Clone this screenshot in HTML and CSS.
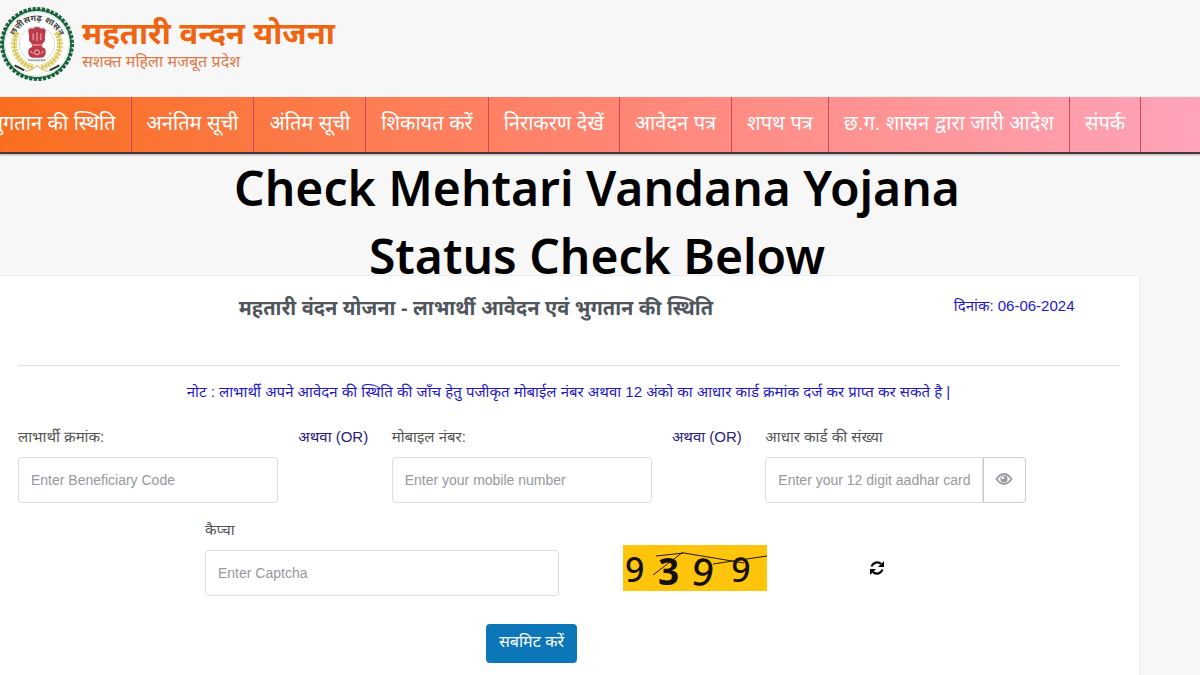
FILE: index.html
```html
<!DOCTYPE html>
<html lang="hi">
<head>
  <meta charset="UTF-8">
  <meta name="viewport" content="width=device-width, initial-scale=1.0">
  <title>महतारी वन्दन योजना</title>
  <link rel="stylesheet" href="styles.css">
</head>
<body>
  <header class="site-header">
    <svg class="logo" viewBox="0 0 76 76" role="img" aria-label="छत्तीसगढ़ शासन">
      <circle cx="38" cy="38" r="35" fill="#fdfdfb" stroke="#2c7a54" stroke-width="2"/>
      <circle cx="38" cy="38" r="36" fill="none" stroke="#17613c" stroke-width="4" stroke-dasharray="3.200 1.512"/>
      <circle cx="38" cy="38" r="33" fill="none" stroke="#b9d4c3" stroke-width="0.600"/>
      <path id="arc" d="M14 34 A24.500 24.500 0 0 1 62 34" fill="none"/>
      <text class="logo-text"><textPath href="#arc" startOffset="50%" text-anchor="middle">छत्तीसगढ़ शासन</textPath></text>
      <path d="M18 26 A24 24 0 0 0 34 62 M58 26 A24 24 0 0 1 42 62" fill="none" stroke="#e2d26e" stroke-width="6" stroke-dasharray="2.600 1"/>
      <path d="M18 26 A24 24 0 0 0 34 62 M58 26 A24 24 0 0 1 42 62" fill="none" stroke="#cdbb55" stroke-width="1"/>
      <circle cx="38" cy="38" r="18" fill="#fff" stroke="#cfe0da" stroke-width="1"/>
      <path d="M15 60 L25 65 M51 65 L61 60" stroke="#333" stroke-width="2"/>
      <path d="M26 66 Q33 65 38 60 Q43 65 50 66" fill="none" stroke="#d8c98c" stroke-width="1.400"/>
      <g fill="#bd3a49">
        <path d="M29 24 q1-3 5-2 q4-3 8 0 q4-1 5 2 l-1 7 q1 4-2 6 h-12 q-3-2-2-6z"/>
        <path d="M32 36 h12 l-1 5 h-10z"/>
        <rect x="29" y="41" width="18" height="11" rx="5"/>
      </g>
      <path d="M34 27 v7 M38 26 v9 M42 27 v7 M33 39 h10" stroke="#f0bcc0" stroke-width="1"/>
      <circle cx="38" cy="46.500" r="2.500" fill="none" stroke="#f3cdd0"/>
      <path d="M31 45 l3 3 M45 45 l-3 3" stroke="#f3cdd0"/>
      <path d="M29 54.500 h18" stroke="#777" stroke-width="1.300" stroke-dasharray="2 0.600"/>
    </svg>
    <div class="brand">
      <div class="brand-name">महतारी वन्दन योजना</div>
      <div class="brand-tag">सशक्त महिला मजबूत प्रदेश</div>
    </div>
  </header>

  <nav class="main-nav">
    <a href="#">भुगतान की स्थिति</a>
    <a href="#">अनंतिम सूची</a>
    <a href="#">अंतिम सूची</a>
    <a href="#">शिकायत करें</a>
    <a href="#">निराकरण देखें</a>
    <a href="#">आवेदन पत्र</a>
    <a href="#">शपथ पत्र</a>
    <a href="#">छ.ग. शासन द्वारा जारी आदेश</a>
    <a href="#">संपर्क</a>
  </nav>

  <h1 class="headline">Check Mehtari Vandana Yojana<br>Status Check Below</h1>

  <main class="card">
    <div class="card-head">
      <h2>महतारी वंदन योजना - लाभार्थी आवेदन एवं भुगतान की स्थिति</h2>
      <div class="date">दिनांक: 06-06-2024</div>
    </div>
    <p class="note">नोट : लाभार्थी अपने आवेदन की स्थिति की जाँच हेतु पजीकृत मोबाईल नंबर अथवा 12 अंको का आधार कार्ड क्रमांक दर्ज कर प्राप्त कर सकते है |</p>
    <form>
      <div class="row">
        <div class="field">
          <label for="code">लाभार्थी क्रमांक:</label>
          <input type="text" id="code" placeholder="Enter Beneficiary Code">
        </div>
        <div class="or">अथवा (OR)</div>
        <div class="field">
          <label for="mobile">मोबाइल नंबर:</label>
          <input type="text" id="mobile" placeholder="Enter your mobile number">
        </div>
        <div class="or">अथवा (OR)</div>
        <div class="field">
          <label for="aadhar">आधार कार्ड की संख्या</label>
          <div class="input-group">
            <input type="text" id="aadhar" placeholder="Enter your 12 digit aadhar card">
            <button type="button" class="eye" aria-label="Show">
              <svg viewBox="0 0 18 14" width="18" height="14">
                <path d="M1.500 7 Q9 -3 16.500 7 Q9 17 1.500 7z" fill="none" stroke="#999ea3" stroke-width="1.800"/>
                <circle cx="9" cy="7" r="3.600" fill="#999ea3"/>
                <circle cx="7.800" cy="5.800" r="1.300" fill="#fff"/>
              </svg>
            </button>
          </div>
        </div>
      </div>
      <div class="row captcha-row">
        <div class="field captcha-field">
          <label for="captcha">कैप्चा</label>
          <input type="text" id="captcha" placeholder="Enter Captcha">
        </div>
        <svg class="captcha" viewBox="0 0 144 46" role="img" aria-label="captcha">
          <rect width="144" height="46" fill="#ffc40c"/>
          <g class="captcha-text">
            <text x="2" y="37" font-size="34">9</text>
            <text x="35" y="40" font-size="37" font-weight="bold">3</text>
            <text x="69" y="41" font-size="38" transform="rotate(9 80 28)">9</text>
            <text x="108" y="37" font-size="34" transform="rotate(4 118 25)">9</text>
          </g>
          <path d="M33 11 L61 8 L121 18 M30 30 L60 7 M90 19 L144 11" fill="none" stroke="#221a00" stroke-width="1"/>
        </svg>
        <button type="button" class="refresh" aria-label="Refresh">
          <svg viewBox="0 0 16 16" width="16" height="16">
            <path d="M2.500 6.500 A6 6 0 0 1 12 3.800 M13.500 9.500 A6 6 0 0 1 4 12.200" fill="none" stroke="#000" stroke-width="2.200"/>
            <path d="M15 1 V7 H9z M1 15 V9 H7z"/>
          </svg>
        </button>
      </div>
      <div class="actions">
        <button type="submit" class="submit">सबमिट करें</button>
      </div>
    </form>
  </main>
</body>
</html>
```
FILE: styles.css
```css
* { box-sizing: border-box; }
body {
  margin: 0;
  background: #f7f7f7;
  color: #555;
  font-family: "Liberation Sans", "Noto Sans Devanagari", "Noto Sans", sans-serif;
  font-size: 15px;
  line-height: 24px;
  overflow: hidden;
}

.site-header {
  display: flex;
  gap: 8px;
  height: 97px;
  padding-top: 6px;
}
.logo { width: 74px; height: 76px; }
.logo-text { font-size: 9px; font-weight: bold; fill: #444; }
.brand-name {
  color: #ee6511;
  font-size: 31px;
  font-weight: bold;
  line-height: 40px;
  padding-top: 8px;
}
.brand-tag { color: #e07848; font-size: 16px; line-height: 16px; }

.main-nav {
  display: flex;
  height: 57px;
  background: linear-gradient(to right, #f96e1e, #ff8573 50%, #fea4ba);
  border-bottom: 2px solid #4b3535;
  box-shadow: 0 1px 2px #aaa;
}
.main-nav a {
  flex: none;
  padding: 0 15px;
  border-right: 1px solid #c9485a;
  color: #fff;
  font-size: 20px;
  line-height: 52px;
  text-decoration: none;
}
.main-nav a:first-child { margin-left: -26px; }

.headline {
  position: relative;
  z-index: 1;
  margin: 0 6px -15px 0;
  color: #000;
  font-family: "Noto Sans", sans-serif;
  font-size: 48px;
  font-weight: 600;
  line-height: 68px;
  text-align: center;
}

.card {
  width: 95%;
  min-height: 420px;
  padding: 0 0 12px 18px;
  background: #fff;
  border: 1px solid #eee;
  border-left: 0;
}
.card-head {
  display: grid;
  grid-template-columns: 17fr 3fr;
  height: 90px;
  margin-right: 20px;
  padding-top: 18px;
  border-bottom: 1px solid #ddd;
}
.card-head h2 {
  margin: 0;
  padding-right: 20px;
  color: #50565c;
  font-size: 20px;
  font-weight: bold;
  line-height: 28px;
  text-align: center;
}
.date { color: #2418cc; }
.note {
  margin: 14px 0 21px;
  padding-right: 20px;
  color: #2418cc;
  text-align: center;
}

.row {
  display: grid;
  grid-template-columns: 3fr 1fr 3fr 1fr 3fr 1fr;
}
.field { padding-right: 20px; }
label { display: block; margin-bottom: 8px; }
.or { color: #29207d; white-space: nowrap; }
input {
  width: 100%;
  height: 46px;
  padding: 0 12px;
  border: 1px solid #ddd;
  border-radius: 4px;
  background: #fff;
  color: #555;
  font-family: inherit;
  font-size: 14px;
}
input::placeholder { color: #95999e; }
.input-group { display: flex; }
.input-group input { flex: 1; min-width: 0; border-radius: 4px 0 0 4px; }
.eye {
  width: 43px;
  padding: 0;
  border: 1px solid #ccc;
  border-radius: 0 4px 4px 0;
  background: #fff;
}

.captcha-row {
  grid-template-columns: 4fr 3fr 3fr;
  margin-top: 15px;
  padding-left: 187px;
}
.captcha { width: 144px; height: 46px; margin: 27px 0 0 44px; overflow: visible; }
.captcha-text { font-family: "Noto Sans", sans-serif; font-weight: 500; fill: #141000; }
.refresh {
  justify-self: start;
  width: 16px;
  height: 16px;
  margin: 42px 0 0 10px;
  padding: 0;
  border: 0;
  background: none;
}
.refresh svg { display: block; }

.actions { padding: 28px 94px 0 0; text-align: center; }
.submit {
  height: 39px;
  padding: 0 13px;
  border: 0;
  border-radius: 4px;
  background: #0b77b9;
  color: #fff;
  font-family: inherit;
  font-size: 16px;
}
```
